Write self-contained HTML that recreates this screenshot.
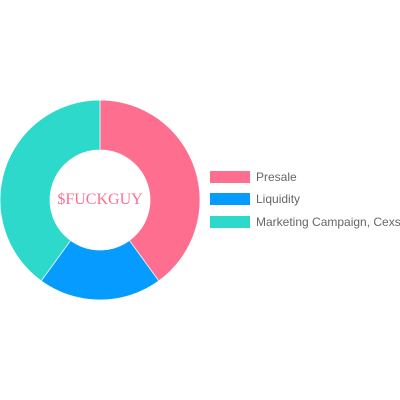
<!DOCTYPE html>
<html><head><meta charset="utf-8"><style>
html,body{margin:0;padding:0;background:#fff;width:400px;height:400px;overflow:hidden}
svg{display:block}
</style></head><body>
<svg width="400" height="400" viewBox="0 0 400 400" xmlns="http://www.w3.org/2000/svg">
<path d="M100,100 A100,100 0 0 1 158.78,280.9 L129.39,240.45 A50,50 0 0 0 100,150 Z" fill="#fe6f8f" stroke="#fff" stroke-width="0.7"/>
<path d="M158.78,280.9 A100,100 0 0 1 41.22,280.9 L70.61,240.45 A50,50 0 0 0 129.39,240.45 Z" fill="#059bff" stroke="#fff" stroke-width="0.7"/>
<path d="M41.22,280.9 A100,100 0 0 1 100,100 L100,150 A50,50 0 0 0 70.61,240.45 Z" fill="#2cd9cb" stroke="#fff" stroke-width="0.7"/>
<text x="100" y="204" text-anchor="middle" font-family="Liberation Serif, serif" font-size="16" fill="#fe6f8f">$FUCKGUY</text>
<rect x="210" y="171" width="40" height="12" fill="#fe6f8f"/>
<rect x="210" y="193" width="40" height="12" fill="#059bff"/>
<rect x="210" y="216" width="40" height="12" fill="#2cd9cb"/>
<g font-family="Liberation Sans, sans-serif" font-size="12" fill="#666">
<text x="256" y="181">Presale</text>
<text x="256" y="203">Liquidity</text>
<text x="256" y="226">Marketing Campaign, Cexs</text>
</g>
</svg>
</body></html>
